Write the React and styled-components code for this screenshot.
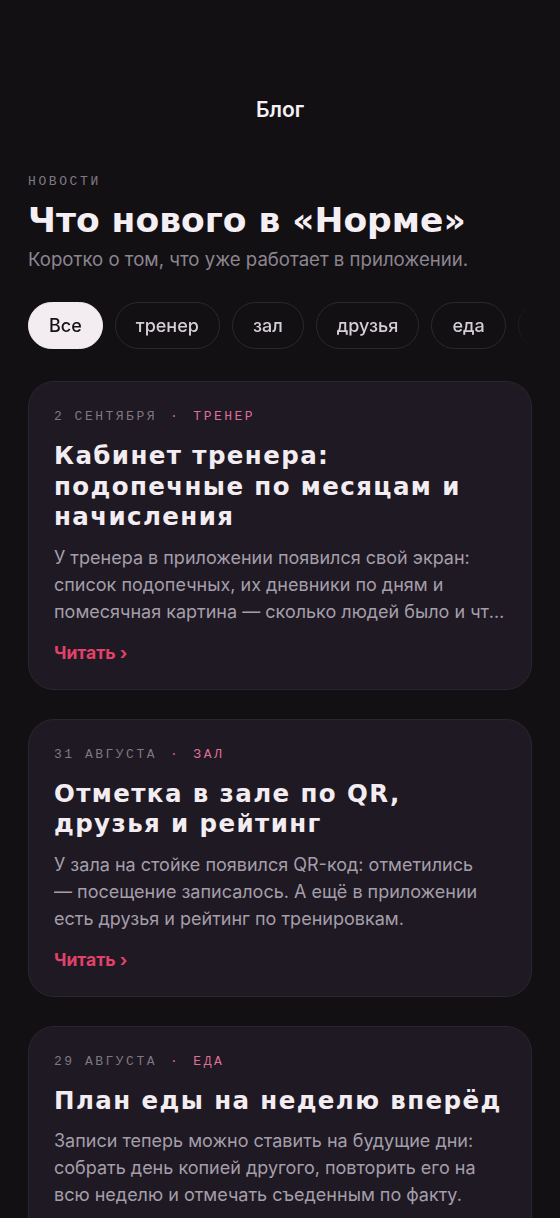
import React, { useState } from "react";
import styled, { createGlobalStyle } from "styled-components";

const posts = [
  {
    date: "2 сентября",
    tag: "тренер",
    title: "Кабинет тренера: подопечные по месяцам и начисления",
    body:
      "У тренера в приложении появился свой экран: список подопечных, их дневники по дням и помесячная картина — сколько людей было и что из этого начислено за месяц.",
  },
  {
    date: "31 августа",
    tag: "зал",
    title: "Отметка в зале по QR, друзья и рейтинг",
    body:
      "У зала на стойке появился QR-код: отметились —\u00a0посещение записалось. А ещё в приложении есть друзья и рейтинг по тренировкам.",
  },
  {
    date: "29 августа",
    tag: "еда",
    title: "План еды на неделю вперёд",
    body:
      "Записи теперь можно ставить на будущие дни: собрать день копией другого, повторить его на всю неделю и отмечать съеденным по факту.",
  },
];

const filters = ["Все", "тренер", "зал", "друзья", "еда", "QR"];

const App = () => {
  const [active, setActive] = useState("Все");

  return (
    <>
      <GlobalStyle />
      <Page>
        <TopBar>Блог</TopBar>

        <Intro>
          <Eyebrow>Новости</Eyebrow>
          <Heading>Что нового в «Норме»</Heading>
          <Lead>Коротко о том, что уже работает в приложении.</Lead>
        </Intro>

        <Chips>
          {filters.map(f => (
            <Chip key={f} $active={active === f} onClick={() => setActive(f)}>
              {f}
            </Chip>
          ))}
        </Chips>

        <PostList>
          {posts.map(post => (
            <Card key={post.title}>
              <Meta>
                <span>{post.date}</span>
                <Dot>·</Dot>
                <Tag>{post.tag}</Tag>
              </Meta>
              <CardTitle>{post.title}</CardTitle>
              <Excerpt>{post.body}</Excerpt>
              <ReadLink href="#">Читать ›</ReadLink>
            </Card>
          ))}
        </PostList>
      </Page>
    </>
  );
};

const GlobalStyle = createGlobalStyle`
  html, body {
    margin: 0;
    padding: 0;
    background: #131014;
  }
  body {
    font-family: Inter, "Noto Sans", sans-serif;
    -webkit-font-smoothing: antialiased;
  }
  * {
    box-sizing: border-box;
  }
`;

const Page = styled.div`
  min-height: 100vh;
  background: #131014;
  padding: 77px 28px 40px;
  display: flex;
  flex-direction: column;
`;

const TopBar = styled.header`
  height: 64px;
  display: flex;
  align-items: center;
  justify-content: center;
  color: #f6f1f5;
  font-size: 21px;
  font-weight: 600;
`;

const Intro = styled.div`
  display: flex;
  flex-direction: column;
  padding-top: 33px;
`;

const Eyebrow = styled.div`
  font-family: "Liberation Mono", "DejaVu Sans Mono", monospace;
  font-size: 13px;
  line-height: 16px;
  letter-spacing: 2.6px;
  text-transform: uppercase;
  color: #7f7984;
`;

const Heading = styled.h1`
  margin: 10px 0 0;
  font-family: "DejaVu Sans", Inter, sans-serif;
  font-weight: 700;
  font-size: 34.5px;
  line-height: 40px;
  color: #f5eff4;
`;

const Lead = styled.p`
  margin: 7px 0 0;
  font-size: 18.6px;
  line-height: 24px;
  color: #8c8590;
`;

const Chips = styled.div`
  display: flex;
  gap: 12px;
  margin-top: 31px;
  overflow: hidden;
  -webkit-mask-image: linear-gradient(to right, #000 calc(100% - 26px), transparent);
  mask-image: linear-gradient(to right, #000 calc(100% - 26px), transparent);
`;

const Chip = styled.button`
  flex: none;
  height: 47px;
  padding: 0 20px;
  border-radius: 999px;
  border: 1px solid ${p => (p.$active ? "#f3ecf1" : "#2c2830")};
  background: ${p => (p.$active ? "#f3ecf1" : "transparent")};
  color: ${p => (p.$active ? "#151116" : "#d4ced6")};
  font-family: Inter, sans-serif;
  font-size: 18px;
  font-weight: 500;
  cursor: pointer;
`;

const PostList = styled.div`
  display: flex;
  flex-direction: column;
  gap: 29px;
  margin-top: 32px;
`;

const Card = styled.article`
  display: flex;
  flex-direction: column;
  background: #1e1922;
  border: 1px solid #2a2530;
  border-radius: 26px;
  padding: 26px 25px 24px;
`;

const Meta = styled.div`
  display: flex;
  align-items: center;
  gap: 13px;
  font-family: "Liberation Mono", "DejaVu Sans Mono", monospace;
  font-size: 13px;
  line-height: 18px;
  letter-spacing: 2.5px;
  text-transform: uppercase;
  color: #7e7883;
`;

const Dot = styled.span`
  color: #d8668f;
`;

const Tag = styled.span`
  color: #de6f98;
`;

const CardTitle = styled.h2`
  margin: 15px 0 0;
  font-family: "DejaVu Sans", Inter, sans-serif;
  font-weight: 700;
  font-size: 24.5px;
  line-height: 30.5px;
  letter-spacing: 1.4px;
  color: #f3edf2;
`;

const Excerpt = styled.p`
  margin: 11px 0 0;
  font-size: 18px;
  line-height: 27px;
  color: #a59eaa;
  display: -webkit-box;
  -webkit-box-orient: vertical;
  -webkit-line-clamp: 3;
  overflow: hidden;
`;

const ReadLink = styled.a`
  margin-top: 16px;
  align-self: flex-start;
  font-size: 17.5px;
  line-height: 24px;
  font-weight: 700;
  color: #e2416a;
  text-decoration: none;
`;

export default App;
